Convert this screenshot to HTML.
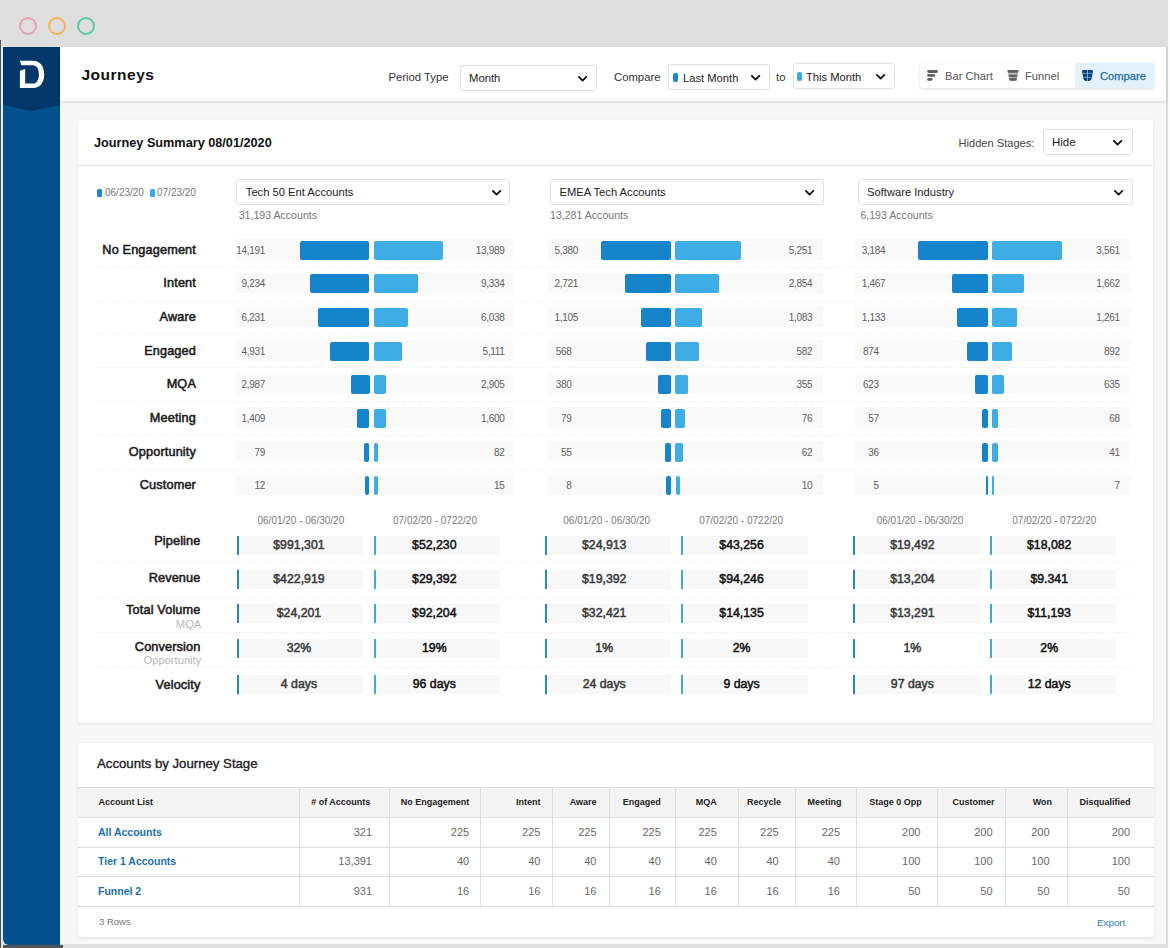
<!DOCTYPE html><html><head><meta charset="utf-8"><style>
*{margin:0;padding:0;box-sizing:border-box}
html,body{width:1170px;height:948px;overflow:hidden;background:#dedede;font-family:"Liberation Sans",sans-serif;color:#222}
.ab{position:absolute}
.t{position:absolute;white-space:nowrap;line-height:1}
.dd{position:absolute;background:#fff;border:1px solid #dedede;border-radius:3px}
.chev{position:absolute;width:7px;height:7px;border-right:2px solid #111;border-bottom:2px solid #111;transform:rotate(45deg)}
.dot{position:absolute;height:1px;background-image:linear-gradient(to right,#dedede 1px,transparent 1px);background-size:3.2px 1px}
.rbg{position:absolute;background:#f9f9f9;border-radius:2px}
.bd{position:absolute;background:#1584cb;border-radius:2px}
.bl{position:absolute;background:#3eade5;border-radius:2px}
.num{position:absolute;font-size:10px;letter-spacing:-0.3px;color:#606060;line-height:1;white-space:nowrap}
.lab{position:absolute;font-size:12.7px;letter-spacing:0.15px;-webkit-text-stroke:0.55px #1c1c1c;color:#1c1c1c;line-height:1;white-space:nowrap;text-align:right}
.mbox{position:absolute;background:#f8f8f8;height:19px}
.mbox:before{content:"";position:absolute;left:0;top:0;bottom:0;width:2px;background:var(--bc)}
.mval{position:absolute;left:0;right:0;top:0;height:19px;line-height:19px;text-align:center;font-size:12.3px;-webkit-text-stroke:0.5px currentColor;white-space:nowrap}
</style></head><body>

<div class="ab" style="left:0;top:0;width:1170px;height:948px;background:#fbfbfb"></div>
<div class="ab" style="left:0;top:0;width:1168px;height:948px;background:#dedede"></div>
<div class="ab" style="left:19px;top:17px;width:18px;height:18px;border:2px solid #e9a0b0;border-radius:50%"></div>
<div class="ab" style="left:48px;top:17px;width:18px;height:18px;border:2px solid #f2b45c;border-radius:50%"></div>
<div class="ab" style="left:77px;top:17px;width:18px;height:18px;border:2px solid #54cba8;border-radius:50%"></div>
<div class="ab" style="left:0;top:40px;width:1.3px;height:908px;background:#505050"></div>
<div class="ab" style="left:1.3px;top:46px;width:1.7px;height:900px;background:#dcedf7"></div>
<div class="ab" style="left:60px;top:47px;width:1106px;height:897px;background:#f7f7f7"></div>
<div class="ab" style="left:1166px;top:46px;width:2px;height:899px;background:#dcdcdc"></div>
<div class="ab" style="left:60px;top:944px;width:1108px;height:4px;background:#dedede"></div>
<div class="ab" style="left:3px;top:945px;width:60px;height:3px;background:#555"></div>
<div class="ab" style="left:3px;top:47px;width:57px;height:898px;background:#02518e;border-bottom-left-radius:6px"></div>
<svg class="ab" style="left:3px;top:47px" width="57" height="66" viewBox="0 0 57 66"><polygon points="0,0 57,0 57,58 28.5,64 0,58" fill="#04386a"/></svg>
<svg class="ab" style="left:14px;top:54px" width="36" height="40" viewBox="14 54 36 40"><path d="M19.9,60.8 L33,60.8 C40,60.8 44.2,66.5 44.2,74.4 C44.2,82.5 40,88 33,88 L19.9,88 L19.9,70.7 L25.2,69.1 L25.2,83.5 L33,83.5 C36.7,83.5 38.9,79.8 38.9,74.4 C38.9,69 36.7,65.2 33,65.2 L21.4,65.2 Z" fill="#fff"/></svg>
<div class="ab" style="left:60px;top:47px;width:1106px;height:54px;background:#fff;box-shadow:0 1px 3px rgba(0,0,0,0.15)"></div>
<div class="t" style="left:81.5px;top:66.6px;font-size:15.5px;letter-spacing:0.5px;font-weight:bold;color:#111">Journeys</div>
<div class="t" style="left:388.5px;top:72px;font-size:11.3px;color:#333">Period Type</div>
<div class="dd" style="left:460px;top:65px;width:137px;height:26px"></div>
<div class="t" style="left:469px;top:72.5px;font-size:11.3px;color:#222">Month</div>
<svg class="ab" style="left:577.8px;top:75.5px" width="10" height="6" viewBox="0 0 10 6"><polyline points="0.9,0.9 4.6,4.6 8.3,0.9" fill="none" stroke="#111" stroke-width="1.8" stroke-linecap="round" stroke-linejoin="round"/></svg>
<div class="t" style="left:614px;top:71.5px;font-size:11.3px;color:#333">Compare</div>
<div class="dd" style="left:668px;top:64px;width:102px;height:26px"></div>
<div class="ab" style="left:673px;top:73px;width:5px;height:9px;border-radius:2px;background:#1a86cb"></div>
<div class="t" style="left:683px;top:72.5px;font-size:11.2px;color:#222">Last Month</div>
<svg class="ab" style="left:750.8px;top:75px" width="10" height="6" viewBox="0 0 10 6"><polyline points="0.9,0.9 4.6,4.6 8.3,0.9" fill="none" stroke="#111" stroke-width="1.8" stroke-linecap="round" stroke-linejoin="round"/></svg>
<div class="t" style="left:776px;top:71.5px;font-size:11.3px;color:#333">to</div>
<div class="dd" style="left:793px;top:63px;width:102px;height:26px"></div>
<div class="ab" style="left:797px;top:72px;width:5px;height:9px;border-radius:2px;background:#3ba9e1"></div>
<div class="t" style="left:806px;top:71.5px;font-size:11.2px;color:#222">This Month</div>
<svg class="ab" style="left:875.8px;top:74px" width="10" height="6" viewBox="0 0 10 6"><polyline points="0.9,0.9 4.6,4.6 8.3,0.9" fill="none" stroke="#111" stroke-width="1.8" stroke-linecap="round" stroke-linejoin="round"/></svg>
<div class="ab" style="left:920px;top:63px;width:234px;height:25px;background:#fff;box-shadow:0 1px 3px rgba(0,0,0,0.12);border-radius:2px"></div>
<div class="ab" style="left:1075px;top:63px;width:79px;height:25px;background:#e3f1fb;border-radius:2px"></div>
<svg class="ab" style="left:927px;top:70px" width="12" height="11" viewBox="0 0 12 11"><rect x="0.2" y="0.1" width="10.8" height="2.8" rx="1.4" fill="#5f5f5f"/><rect x="0.2" y="4" width="8" height="2.8" rx="1.4" fill="#5f5f5f"/><rect x="0.2" y="8" width="5.4" height="2.8" rx="1.4" fill="#5f5f5f"/></svg>
<div class="t" style="left:945px;top:70.5px;font-size:11.2px;color:#555">Bar Chart</div>
<svg class="ab" style="left:1007px;top:70px" width="12" height="11" viewBox="0 0 12 11"><path d="M0.5,0.1 L11.5,0.1 L9.8,10.8 L2.3,10.8 Z" fill="#b8b8b8"/><path d="M1,0.1 L11,0.1 C11.6,0.1 11.6,0.6 11.4,1.5 L11.1,2.8 L0.9,2.8 L0.6,1.5 C0.4,0.6 0.4,0.1 1,0.1 Z" fill="#5f5f5f"/><path d="M1.6,4.7 L10.4,4.7 L10.1,7 L1.9,7 Z" fill="#5f5f5f"/><path d="M2.3,8 L9.7,8 L9.4,10 C9.3,10.6 9,10.8 8.5,10.8 L3.5,10.8 C3,10.8 2.7,10.6 2.6,10 Z" fill="#5f5f5f"/></svg>
<div class="t" style="left:1025px;top:70.5px;font-size:11.2px;color:#555">Funnel</div>
<svg class="ab" style="left:1082px;top:70px" width="11" height="11" viewBox="0 0 11 11"><path d="M1.3,0 L9.7,0 C10.8,0 11.1,1 10.9,2 L9.6,8.6 C9.3,10.2 8.3,11 7,11 L4,11 C2.7,11 1.7,10.2 1.4,8.6 L0.1,2 C-0.1,1 0.2,0 1.3,0 Z" fill="#0b3f76"/><rect x="0.5" y="2.9" width="10" height="0.8" fill="#7fb4e0"/><rect x="1.3" y="6.8" width="8.4" height="0.8" fill="#7fb4e0"/><rect x="5.1" y="0" width="0.8" height="11" fill="#8cc4ee"/></svg>
<div class="t" style="left:1100px;top:70.5px;font-size:11.2px;-webkit-text-stroke:0.25px #1b6aa8;color:#1b6aa8">Compare</div>
<div class="ab" style="left:78px;top:120px;width:1075px;height:603px;background:#fff;border-radius:3px;box-shadow:0 1px 3px rgba(0,0,0,0.10)"></div>
<div class="t" style="left:94px;top:136.8px;font-size:12.7px;font-weight:bold;color:#111">Journey Summary 08/01/2020</div>
<div class="t" style="left:958.5px;top:138px;font-size:11.1px;color:#444">Hidden Stages:</div>
<div class="dd" style="left:1043px;top:129px;width:90px;height:26px"></div>
<div class="t" style="left:1052px;top:137px;font-size:11.5px;color:#222">Hide</div>
<svg class="ab" style="left:1113.1px;top:140px" width="10" height="6" viewBox="0 0 10 6"><polyline points="0.9,0.9 4.6,4.6 8.3,0.9" fill="none" stroke="#111" stroke-width="1.8" stroke-linecap="round" stroke-linejoin="round"/></svg>
<div class="ab" style="left:78px;top:165px;width:1075px;height:1px;background:#e6e6e6"></div>
<div class="ab" style="left:97px;top:188.5px;width:4.6px;height:8px;border-radius:1.5px;background:#1a86cb"></div>
<div class="t" style="left:105px;top:187.5px;font-size:10px;color:#777">06/23/20</div>
<div class="ab" style="left:150.3px;top:188.5px;width:4.6px;height:8px;border-radius:1.5px;background:#3ba9e1"></div>
<div class="t" style="left:157px;top:187.5px;font-size:10px;color:#777">07/23/20</div>
<div class="dd" style="left:235.8px;top:179px;width:274.7px;height:26px"></div>
<div class="t" style="left:245.8px;top:186.7px;font-size:11.2px;color:#222">Tech 50 Ent Accounts</div>
<svg class="ab" style="left:492.0px;top:189.5px" width="10" height="6" viewBox="0 0 10 6"><polyline points="0.9,0.9 4.6,4.6 8.3,0.9" fill="none" stroke="#111" stroke-width="1.8" stroke-linecap="round" stroke-linejoin="round"/></svg>
<div class="t" style="left:238.70000000000002px;top:210.2px;font-size:10.6px;color:#777">31,193 Accounts</div>
<div class="dd" style="left:549.5px;top:179px;width:274.0px;height:26px"></div>
<div class="t" style="left:559.5px;top:186.7px;font-size:11.2px;color:#222">EMEA Tech Accounts</div>
<svg class="ab" style="left:805.0px;top:189.5px" width="10" height="6" viewBox="0 0 10 6"><polyline points="0.9,0.9 4.6,4.6 8.3,0.9" fill="none" stroke="#111" stroke-width="1.8" stroke-linecap="round" stroke-linejoin="round"/></svg>
<div class="t" style="left:550.0px;top:210.2px;font-size:10.6px;color:#777">13,281 Accounts</div>
<div class="dd" style="left:858px;top:179px;width:274.5999999999999px;height:26px"></div>
<div class="t" style="left:867px;top:186.7px;font-size:11.2px;color:#222">Software Industry</div>
<svg class="ab" style="left:1114.1px;top:189.5px" width="10" height="6" viewBox="0 0 10 6"><polyline points="0.9,0.9 4.6,4.6 8.3,0.9" fill="none" stroke="#111" stroke-width="1.8" stroke-linecap="round" stroke-linejoin="round"/></svg>
<div class="t" style="left:860.4px;top:210.2px;font-size:10.6px;color:#777">6,193 Accounts</div>
<div class="dot" style="left:96px;top:267.3px;width:1034px"></div>
<div class="dot" style="left:96px;top:300.6px;width:1034px"></div>
<div class="dot" style="left:96px;top:332.5px;width:1034px"></div>
<div class="dot" style="left:96px;top:367.0px;width:1034px"></div>
<div class="dot" style="left:96px;top:400.9px;width:1034px"></div>
<div class="dot" style="left:96px;top:434.5px;width:1034px"></div>
<div class="dot" style="left:96px;top:469.0px;width:1034px"></div>
<div class="lab" style="right:974px;top:243.8px">No Engagement</div>
<div class="rbg" style="left:236px;top:239.3px;width:276.5px;height:20.5px"></div>
<div class="bd" style="left:299.7px;top:240.8px;width:69.8px;height:19px"></div>
<div class="bl" style="left:373.8px;top:240.8px;width:69.6px;height:19px"></div>
<div class="num" style="right:905px;top:245.8px">14,191</div>
<div class="num" style="right:665.5px;top:245.8px">13,989</div>
<div class="rbg" style="left:548px;top:239.3px;width:275.3px;height:20.5px"></div>
<div class="bd" style="left:601px;top:240.8px;width:69.8px;height:19px"></div>
<div class="bl" style="left:675.4px;top:240.8px;width:65.9px;height:19px"></div>
<div class="num" style="left:554.6px;top:245.8px;min-width:17px;text-align:right">5,380</div>
<div class="num" style="right:357.70000000000005px;top:245.8px">5,251</div>
<div class="rbg" style="left:854.7px;top:239.3px;width:275.3px;height:20.5px"></div>
<div class="bd" style="left:918px;top:240.8px;width:69.8px;height:19px"></div>
<div class="bl" style="left:991.9px;top:240.8px;width:69.8px;height:19px"></div>
<div class="num" style="left:861.7px;top:245.8px;min-width:17px;text-align:right">3,184</div>
<div class="num" style="right:50.299999999999955px;top:245.8px">3,561</div>
<div class="lab" style="right:974px;top:277.4px">Intent</div>
<div class="rbg" style="left:236px;top:272.9px;width:276.5px;height:20.5px"></div>
<div class="bd" style="left:310.2px;top:274.4px;width:59.3px;height:19px"></div>
<div class="bl" style="left:373.8px;top:274.4px;width:44.7px;height:19px"></div>
<div class="num" style="right:905px;top:279.4px">9,234</div>
<div class="num" style="right:665.5px;top:279.4px">9,334</div>
<div class="rbg" style="left:548px;top:272.9px;width:275.3px;height:20.5px"></div>
<div class="bd" style="left:625.1px;top:274.4px;width:45.7px;height:19px"></div>
<div class="bl" style="left:675.4px;top:274.4px;width:44.1px;height:19px"></div>
<div class="num" style="left:554.6px;top:279.4px;min-width:17px;text-align:right">2,721</div>
<div class="num" style="right:357.70000000000005px;top:279.4px">2,854</div>
<div class="rbg" style="left:854.7px;top:272.9px;width:275.3px;height:20.5px"></div>
<div class="bd" style="left:951.9px;top:274.4px;width:35.9px;height:19px"></div>
<div class="bl" style="left:991.9px;top:274.4px;width:32.1px;height:19px"></div>
<div class="num" style="left:861.7px;top:279.4px;min-width:17px;text-align:right">1,467</div>
<div class="num" style="right:50.299999999999955px;top:279.4px">1,662</div>
<div class="lab" style="right:974px;top:311.0px">Aware</div>
<div class="rbg" style="left:236px;top:306.5px;width:276.5px;height:20.5px"></div>
<div class="bd" style="left:318.2px;top:308.0px;width:51.3px;height:19px"></div>
<div class="bl" style="left:373.8px;top:308.0px;width:34.2px;height:19px"></div>
<div class="num" style="right:905px;top:313.0px">6,231</div>
<div class="num" style="right:665.5px;top:313.0px">6,038</div>
<div class="rbg" style="left:548px;top:306.5px;width:275.3px;height:20.5px"></div>
<div class="bd" style="left:641.3px;top:308.0px;width:29.5px;height:19px"></div>
<div class="bl" style="left:675.4px;top:308.0px;width:26.6px;height:19px"></div>
<div class="num" style="left:554.6px;top:313.0px;min-width:17px;text-align:right">1,105</div>
<div class="num" style="right:357.70000000000005px;top:313.0px">1,083</div>
<div class="rbg" style="left:854.7px;top:306.5px;width:275.3px;height:20.5px"></div>
<div class="bd" style="left:956.8px;top:308.0px;width:31.0px;height:19px"></div>
<div class="bl" style="left:991.9px;top:308.0px;width:24.9px;height:19px"></div>
<div class="num" style="left:861.7px;top:313.0px;min-width:17px;text-align:right">1,133</div>
<div class="num" style="right:50.299999999999955px;top:313.0px">1,261</div>
<div class="lab" style="right:974px;top:344.6px">Engaged</div>
<div class="rbg" style="left:236px;top:340.1px;width:276.5px;height:20.5px"></div>
<div class="bd" style="left:330.3px;top:341.6px;width:39.2px;height:19px"></div>
<div class="bl" style="left:373.8px;top:341.6px;width:28.0px;height:19px"></div>
<div class="num" style="right:905px;top:346.6px">4,931</div>
<div class="num" style="right:665.5px;top:346.6px">5,111</div>
<div class="rbg" style="left:548px;top:340.1px;width:275.3px;height:20.5px"></div>
<div class="bd" style="left:645.9px;top:341.6px;width:24.9px;height:19px"></div>
<div class="bl" style="left:675.4px;top:341.6px;width:24.1px;height:19px"></div>
<div class="num" style="left:554.6px;top:346.6px;min-width:17px;text-align:right">568</div>
<div class="num" style="right:357.70000000000005px;top:346.6px">582</div>
<div class="rbg" style="left:854.7px;top:340.1px;width:275.3px;height:20.5px"></div>
<div class="bd" style="left:967px;top:341.6px;width:20.8px;height:19px"></div>
<div class="bl" style="left:991.9px;top:341.6px;width:19.8px;height:19px"></div>
<div class="num" style="left:861.7px;top:346.6px;min-width:17px;text-align:right">874</div>
<div class="num" style="right:50.299999999999955px;top:346.6px">892</div>
<div class="lab" style="right:974px;top:378.2px">MQA</div>
<div class="rbg" style="left:236px;top:373.7px;width:276.5px;height:20.5px"></div>
<div class="bd" style="left:351px;top:375.2px;width:18.5px;height:19px"></div>
<div class="bl" style="left:373.8px;top:375.2px;width:11.8px;height:19px"></div>
<div class="num" style="right:905px;top:380.2px">2,987</div>
<div class="num" style="right:665.5px;top:380.2px">2,905</div>
<div class="rbg" style="left:548px;top:373.7px;width:275.3px;height:20.5px"></div>
<div class="bd" style="left:658px;top:375.2px;width:12.8px;height:19px"></div>
<div class="bl" style="left:675.4px;top:375.2px;width:12.6px;height:19px"></div>
<div class="num" style="left:554.6px;top:380.2px;min-width:17px;text-align:right">380</div>
<div class="num" style="right:357.70000000000005px;top:380.2px">355</div>
<div class="rbg" style="left:854.7px;top:373.7px;width:275.3px;height:20.5px"></div>
<div class="bd" style="left:975px;top:375.2px;width:12.8px;height:19px"></div>
<div class="bl" style="left:991.9px;top:375.2px;width:12.1px;height:19px"></div>
<div class="num" style="left:861.7px;top:380.2px;min-width:17px;text-align:right">623</div>
<div class="num" style="right:50.299999999999955px;top:380.2px">635</div>
<div class="lab" style="right:974px;top:411.9px">Meeting</div>
<div class="rbg" style="left:236px;top:407.4px;width:276.5px;height:20.5px"></div>
<div class="bd" style="left:356.7px;top:408.9px;width:12.8px;height:19px"></div>
<div class="bl" style="left:373.8px;top:408.9px;width:11.8px;height:19px"></div>
<div class="num" style="right:905px;top:413.9px">1,409</div>
<div class="num" style="right:665.5px;top:413.9px">1,600</div>
<div class="rbg" style="left:548px;top:407.4px;width:275.3px;height:20.5px"></div>
<div class="bd" style="left:661px;top:408.9px;width:9.8px;height:19px"></div>
<div class="bl" style="left:675.4px;top:408.9px;width:9.7px;height:19px"></div>
<div class="num" style="left:554.6px;top:413.9px;min-width:17px;text-align:right">79</div>
<div class="num" style="right:357.70000000000005px;top:413.9px">76</div>
<div class="rbg" style="left:854.7px;top:407.4px;width:275.3px;height:20.5px"></div>
<div class="bd" style="left:981.7px;top:408.9px;width:6.1px;height:19px"></div>
<div class="bl" style="left:991.9px;top:408.9px;width:6.4px;height:19px"></div>
<div class="num" style="left:861.7px;top:413.9px;min-width:17px;text-align:right">57</div>
<div class="num" style="right:50.299999999999955px;top:413.9px">68</div>
<div class="lab" style="right:974px;top:445.5px">Opportunity</div>
<div class="rbg" style="left:236px;top:441.0px;width:276.5px;height:20.5px"></div>
<div class="bd" style="left:363.8px;top:442.5px;width:5.7px;height:19px"></div>
<div class="bl" style="left:373.8px;top:442.5px;width:4.4px;height:19px"></div>
<div class="num" style="right:905px;top:447.5px">79</div>
<div class="num" style="right:665.5px;top:447.5px">82</div>
<div class="rbg" style="left:548px;top:441.0px;width:275.3px;height:20.5px"></div>
<div class="bd" style="left:664.9px;top:442.5px;width:5.9px;height:19px"></div>
<div class="bl" style="left:675.4px;top:442.5px;width:7.4px;height:19px"></div>
<div class="num" style="left:554.6px;top:447.5px;min-width:17px;text-align:right">55</div>
<div class="num" style="right:357.70000000000005px;top:447.5px">62</div>
<div class="rbg" style="left:854.7px;top:441.0px;width:275.3px;height:20.5px"></div>
<div class="bd" style="left:982.4px;top:442.5px;width:5.4px;height:19px"></div>
<div class="bl" style="left:991.9px;top:442.5px;width:6.4px;height:19px"></div>
<div class="num" style="left:861.7px;top:447.5px;min-width:17px;text-align:right">36</div>
<div class="num" style="right:50.299999999999955px;top:447.5px">41</div>
<div class="lab" style="right:974px;top:479.1px">Customer</div>
<div class="rbg" style="left:236px;top:474.6px;width:276.5px;height:20.5px"></div>
<div class="bd" style="left:364.9px;top:476.1px;width:4.6px;height:19px"></div>
<div class="bl" style="left:373.8px;top:476.1px;width:4.4px;height:19px"></div>
<div class="num" style="right:905px;top:481.1px">12</div>
<div class="num" style="right:665.5px;top:481.1px">15</div>
<div class="rbg" style="left:548px;top:474.6px;width:275.3px;height:20.5px"></div>
<div class="bd" style="left:665.9px;top:476.1px;width:4.9px;height:19px"></div>
<div class="bl" style="left:676.4px;top:476.1px;width:4.1px;height:19px"></div>
<div class="num" style="left:554.6px;top:481.1px;min-width:17px;text-align:right">8</div>
<div class="num" style="right:357.70000000000005px;top:481.1px">10</div>
<div class="rbg" style="left:854.7px;top:474.6px;width:275.3px;height:20.5px"></div>
<div class="bd" style="left:986px;top:476.1px;width:2.0px;height:19px"></div>
<div class="bl" style="left:991.7px;top:476.1px;width:2.0px;height:19px"></div>
<div class="num" style="left:861.7px;top:481.1px;min-width:17px;text-align:right">5</div>
<div class="num" style="right:50.299999999999955px;top:481.1px">7</div>
<div class="dot" style="left:96px;top:562.3px;width:1034px"></div>
<div class="dot" style="left:96px;top:596.7px;width:1034px"></div>
<div class="dot" style="left:96px;top:631.8px;width:1034px"></div>
<div class="dot" style="left:96px;top:666.8px;width:1034px"></div>
<div class="t" style="left:257.5px;top:516.2px;width:85.80000000000001px;text-align:center;font-size:10px;color:#7a7a7a">06/01/20 - 06/30/20</div>
<div class="t" style="left:393px;top:516.2px;width:83.80000000000001px;text-align:center;font-size:10px;color:#7a7a7a">07/02/20 - 0722/20</div>
<div class="mbox" style="--bc:#2a86c0;left:237.2px;top:535.5px;width:126.3px"><div class="mval" style="color:#3a3a3a;margin-left:-2.8px">$991,301</div></div>
<div class="mbox" style="--bc:#45a6da;left:373.5px;top:535.5px;width:126.8px"><div class="mval" style="color:#111;margin-left:-5.2px">$52,230</div></div>
<div class="mbox" style="--bc:#2a86c0;left:237.2px;top:570px;width:126.3px"><div class="mval" style="color:#3a3a3a;margin-left:-2.8px">$422,919</div></div>
<div class="mbox" style="--bc:#45a6da;left:373.5px;top:570px;width:126.8px"><div class="mval" style="color:#111;margin-left:-5.2px">$29,392</div></div>
<div class="mbox" style="--bc:#2a86c0;left:237.2px;top:604px;width:126.3px"><div class="mval" style="color:#3a3a3a;margin-left:-2.8px">$24,201</div></div>
<div class="mbox" style="--bc:#45a6da;left:373.5px;top:604px;width:126.8px"><div class="mval" style="color:#111;margin-left:-5.2px">$92,204</div></div>
<div class="mbox" style="--bc:#2a86c0;left:237.2px;top:638.8px;width:126.3px"><div class="mval" style="color:#3a3a3a;margin-left:-2.8px">32%</div></div>
<div class="mbox" style="--bc:#45a6da;left:373.5px;top:638.8px;width:126.8px"><div class="mval" style="color:#111;margin-left:-5.2px">19%</div></div>
<div class="mbox" style="--bc:#2a86c0;left:237.2px;top:674.5px;width:126.3px"><div class="mval" style="color:#3a3a3a;margin-left:-2.8px">4 days</div></div>
<div class="mbox" style="--bc:#45a6da;left:373.5px;top:674.5px;width:126.8px"><div class="mval" style="color:#111;margin-left:-5.2px">96 days</div></div>
<div class="t" style="left:563.3px;top:516.2px;width:85.90000000000009px;text-align:center;font-size:10px;color:#7a7a7a">06/01/20 - 06/30/20</div>
<div class="t" style="left:699.2px;top:516.2px;width:83.39999999999998px;text-align:center;font-size:10px;color:#7a7a7a">07/02/20 - 0722/20</div>
<div class="mbox" style="--bc:#2a86c0;left:544.9px;top:535.5px;width:126.6px"><div class="mval" style="color:#3a3a3a;margin-left:-8px">$24,913</div></div>
<div class="mbox" style="--bc:#45a6da;left:681.3px;top:535.5px;width:126.9px"><div class="mval" style="color:#111;margin-left:-6.4px">$43,256</div></div>
<div class="mbox" style="--bc:#2a86c0;left:544.9px;top:570px;width:126.6px"><div class="mval" style="color:#3a3a3a;margin-left:-8px">$19,392</div></div>
<div class="mbox" style="--bc:#45a6da;left:681.3px;top:570px;width:126.9px"><div class="mval" style="color:#111;margin-left:-6.4px">$94,246</div></div>
<div class="mbox" style="--bc:#2a86c0;left:544.9px;top:604px;width:126.6px"><div class="mval" style="color:#3a3a3a;margin-left:-8px">$32,421</div></div>
<div class="mbox" style="--bc:#45a6da;left:681.3px;top:604px;width:126.9px"><div class="mval" style="color:#111;margin-left:-6.4px">$14,135</div></div>
<div class="mbox" style="--bc:#2a86c0;left:544.9px;top:638.8px;width:126.6px"><div class="mval" style="color:#3a3a3a;margin-left:-8px">1%</div></div>
<div class="mbox" style="--bc:#45a6da;left:681.3px;top:638.8px;width:126.9px"><div class="mval" style="color:#111;margin-left:-6.4px">2%</div></div>
<div class="mbox" style="--bc:#2a86c0;left:544.9px;top:674.5px;width:126.6px"><div class="mval" style="color:#3a3a3a;margin-left:-8px">24 days</div></div>
<div class="mbox" style="--bc:#45a6da;left:681.3px;top:674.5px;width:126.9px"><div class="mval" style="color:#111;margin-left:-6.4px">9 days</div></div>
<div class="t" style="left:876.7px;top:516.2px;width:85.59999999999991px;text-align:center;font-size:10px;color:#7a7a7a">06/01/20 - 06/30/20</div>
<div class="t" style="left:1012.3px;top:516.2px;width:83.70000000000005px;text-align:center;font-size:10px;color:#7a7a7a">07/02/20 - 0722/20</div>
<div class="mbox" style="--bc:#2a86c0;left:853.3px;top:535.5px;width:127.2px"><div class="mval" style="color:#3a3a3a;margin-left:-9.0px">$19,492</div></div>
<div class="mbox" style="--bc:#45a6da;left:990px;top:535.5px;width:126.4px"><div class="mval" style="color:#111;margin-left:-8px">$18,082</div></div>
<div class="mbox" style="--bc:#2a86c0;left:853.3px;top:570px;width:127.2px"><div class="mval" style="color:#3a3a3a;margin-left:-9.0px">$13,204</div></div>
<div class="mbox" style="--bc:#45a6da;left:990px;top:570px;width:126.4px"><div class="mval" style="color:#111;margin-left:-8px">$9.341</div></div>
<div class="mbox" style="--bc:#2a86c0;left:853.3px;top:604px;width:127.2px"><div class="mval" style="color:#3a3a3a;margin-left:-9.0px">$13,291</div></div>
<div class="mbox" style="--bc:#45a6da;left:990px;top:604px;width:126.4px"><div class="mval" style="color:#111;margin-left:-8px">$11,193</div></div>
<div class="mbox" style="--bc:#2a86c0;background:transparent;left:853.3px;top:638.8px;width:127.2px"><div class="mval" style="color:#3a3a3a;margin-left:-9.0px">1%</div></div>
<div class="mbox" style="--bc:#45a6da;left:990px;top:638.8px;width:126.4px"><div class="mval" style="color:#111;margin-left:-8px">2%</div></div>
<div class="mbox" style="--bc:#2a86c0;left:853.3px;top:674.5px;width:127.2px"><div class="mval" style="color:#3a3a3a;margin-left:-9.0px">97 days</div></div>
<div class="mbox" style="--bc:#45a6da;left:990px;top:674.5px;width:126.4px"><div class="mval" style="color:#111;margin-left:-8px">12 days</div></div>
<div class="lab" style="right:969.5px;top:535.0px">Pipeline</div>
<div class="lab" style="right:969.5px;top:571.5px">Revenue</div>
<div class="lab" style="right:969.5px;top:603.5px">Total Volume</div>
<div class="t" style="right:968.7px;top:618.5px;font-size:11.2px;color:#b8b8b8">MQA</div>
<div class="lab" style="right:969.5px;top:641.0px">Conversion</div>
<div class="t" style="right:968.7px;top:654.5px;font-size:11.2px;color:#b8b8b8">Opportunity</div>
<div class="lab" style="right:969.5px;top:678.5px">Velocity</div>
<div class="ab" style="left:77.5px;top:742.5px;width:1076.5px;height:194.5px;background:#fff;border-radius:3px;box-shadow:0 1px 3px rgba(0,0,0,0.10)"></div>
<div class="t" style="left:97px;top:757px;font-size:13.2px;-webkit-text-stroke:0.35px #222;color:#222">Accounts by Journey Stage</div>
<div class="ab" style="left:77.5px;top:787.5px;width:1076.5px;height:29.5px;background:#f4f4f4"></div>
<div class="ab" style="left:77.5px;top:787px;width:1076.5px;height:1px;background:#dddddd"></div>
<div class="ab" style="left:77.5px;top:816.5px;width:1076.5px;height:1px;background:#dddddd"></div>
<div class="ab" style="left:77.5px;top:846.5px;width:1076.5px;height:1px;background:#dddddd"></div>
<div class="ab" style="left:77.5px;top:876px;width:1076.5px;height:1px;background:#dddddd"></div>
<div class="ab" style="left:77.5px;top:906px;width:1076.5px;height:1px;background:#dddddd"></div>
<div class="ab" style="left:298.7px;top:787px;width:1px;height:120px;background:#dddddd"></div>
<div class="ab" style="left:388.9px;top:787px;width:1px;height:120px;background:#dddddd"></div>
<div class="ab" style="left:480.4px;top:787px;width:1px;height:120px;background:#dddddd"></div>
<div class="ab" style="left:551.9px;top:787px;width:1px;height:120px;background:#dddddd"></div>
<div class="ab" style="left:609.0px;top:787px;width:1px;height:120px;background:#dddddd"></div>
<div class="ab" style="left:675.0px;top:787px;width:1px;height:120px;background:#dddddd"></div>
<div class="ab" style="left:737.9px;top:787px;width:1px;height:120px;background:#dddddd"></div>
<div class="ab" style="left:795.0px;top:787px;width:1px;height:120px;background:#dddddd"></div>
<div class="ab" style="left:855.9px;top:787px;width:1px;height:120px;background:#dddddd"></div>
<div class="ab" style="left:937.4px;top:787px;width:1px;height:120px;background:#dddddd"></div>
<div class="ab" style="left:1005.1px;top:787px;width:1px;height:120px;background:#dddddd"></div>
<div class="ab" style="left:1066.9px;top:787px;width:1px;height:120px;background:#dddddd"></div>
<div class="t" style="left:98.5px;top:798.2px;font-size:9px;font-weight:bold;color:#222">Account List</div>
<div class="t" style="right:799.7px;top:798.2px;font-size:9px;font-weight:bold;color:#222"># of Accounts</div>
<div class="t" style="right:700.8px;top:798.2px;font-size:9px;font-weight:bold;color:#222">No Engagement</div>
<div class="t" style="right:629.6px;top:798.2px;font-size:9px;font-weight:bold;color:#222">Intent</div>
<div class="t" style="right:573.5px;top:798.2px;font-size:9px;font-weight:bold;color:#222">Aware</div>
<div class="t" style="right:509.2px;top:798.2px;font-size:9px;font-weight:bold;color:#222">Engaged</div>
<div class="t" style="right:453.2px;top:798.2px;font-size:9px;font-weight:bold;color:#222">MQA</div>
<div class="t" style="right:389.0px;top:798.2px;font-size:9px;font-weight:bold;color:#222">Recycle</div>
<div class="t" style="right:328.4px;top:798.2px;font-size:9px;font-weight:bold;color:#222">Meeting</div>
<div class="t" style="right:248.2px;top:798.2px;font-size:9px;font-weight:bold;color:#222">Stage 0 Opp</div>
<div class="t" style="right:175.4px;top:798.2px;font-size:9px;font-weight:bold;color:#222">Customer</div>
<div class="t" style="right:118.0px;top:798.2px;font-size:9px;font-weight:bold;color:#222">Won</div>
<div class="t" style="right:39.5px;top:798.2px;font-size:9px;font-weight:bold;color:#222">Disqualified</div>
<div class="t" style="left:98px;top:826.5px;font-size:10.5px;font-weight:bold;color:#1c6fae">All Accounts</div>
<div class="t" style="right:798.0px;top:826.5px;font-size:11px;color:#686868">321</div>
<div class="t" style="right:700.8px;top:826.5px;font-size:11px;color:#686868">225</div>
<div class="t" style="right:629.6px;top:826.5px;font-size:11px;color:#686868">225</div>
<div class="t" style="right:573.5px;top:826.5px;font-size:11px;color:#686868">225</div>
<div class="t" style="right:509.2px;top:826.5px;font-size:11px;color:#686868">225</div>
<div class="t" style="right:453.2px;top:826.5px;font-size:11px;color:#686868">225</div>
<div class="t" style="right:391.3px;top:826.5px;font-size:11px;color:#686868">225</div>
<div class="t" style="right:330.0px;top:826.5px;font-size:11px;color:#686868">225</div>
<div class="t" style="right:249.6px;top:826.5px;font-size:11px;color:#686868">200</div>
<div class="t" style="right:177.4px;top:826.5px;font-size:11px;color:#686868">200</div>
<div class="t" style="right:120.4px;top:826.5px;font-size:11px;color:#686868">200</div>
<div class="t" style="right:40.0px;top:826.5px;font-size:11px;color:#686868">200</div>
<div class="t" style="left:98px;top:856.3px;font-size:10.5px;font-weight:bold;color:#1c6fae">Tier 1 Accounts</div>
<div class="t" style="right:798.0px;top:856.3px;font-size:11px;color:#686868">13,391</div>
<div class="t" style="right:700.8px;top:856.3px;font-size:11px;color:#686868">40</div>
<div class="t" style="right:629.6px;top:856.3px;font-size:11px;color:#686868">40</div>
<div class="t" style="right:573.5px;top:856.3px;font-size:11px;color:#686868">40</div>
<div class="t" style="right:509.2px;top:856.3px;font-size:11px;color:#686868">40</div>
<div class="t" style="right:453.2px;top:856.3px;font-size:11px;color:#686868">40</div>
<div class="t" style="right:391.3px;top:856.3px;font-size:11px;color:#686868">40</div>
<div class="t" style="right:330.0px;top:856.3px;font-size:11px;color:#686868">40</div>
<div class="t" style="right:249.6px;top:856.3px;font-size:11px;color:#686868">100</div>
<div class="t" style="right:177.4px;top:856.3px;font-size:11px;color:#686868">100</div>
<div class="t" style="right:120.4px;top:856.3px;font-size:11px;color:#686868">100</div>
<div class="t" style="right:40.0px;top:856.3px;font-size:11px;color:#686868">100</div>
<div class="t" style="left:98px;top:886.1px;font-size:10.5px;font-weight:bold;color:#1c6fae">Funnel 2</div>
<div class="t" style="right:798.0px;top:886.1px;font-size:11px;color:#686868">931</div>
<div class="t" style="right:700.8px;top:886.1px;font-size:11px;color:#686868">16</div>
<div class="t" style="right:629.6px;top:886.1px;font-size:11px;color:#686868">16</div>
<div class="t" style="right:573.5px;top:886.1px;font-size:11px;color:#686868">16</div>
<div class="t" style="right:509.2px;top:886.1px;font-size:11px;color:#686868">16</div>
<div class="t" style="right:453.2px;top:886.1px;font-size:11px;color:#686868">16</div>
<div class="t" style="right:391.3px;top:886.1px;font-size:11px;color:#686868">16</div>
<div class="t" style="right:330.0px;top:886.1px;font-size:11px;color:#686868">16</div>
<div class="t" style="right:249.6px;top:886.1px;font-size:11px;color:#686868">50</div>
<div class="t" style="right:177.4px;top:886.1px;font-size:11px;color:#686868">50</div>
<div class="t" style="right:120.4px;top:886.1px;font-size:11px;color:#686868">50</div>
<div class="t" style="right:40.0px;top:886.1px;font-size:11px;color:#686868">50</div>
<div class="t" style="left:99px;top:917px;font-size:9.5px;color:#777">3 Rows</div>
<div class="t" style="left:1097px;top:918px;font-size:9.8px;color:#2a7ab8">Export</div>
</body></html>
